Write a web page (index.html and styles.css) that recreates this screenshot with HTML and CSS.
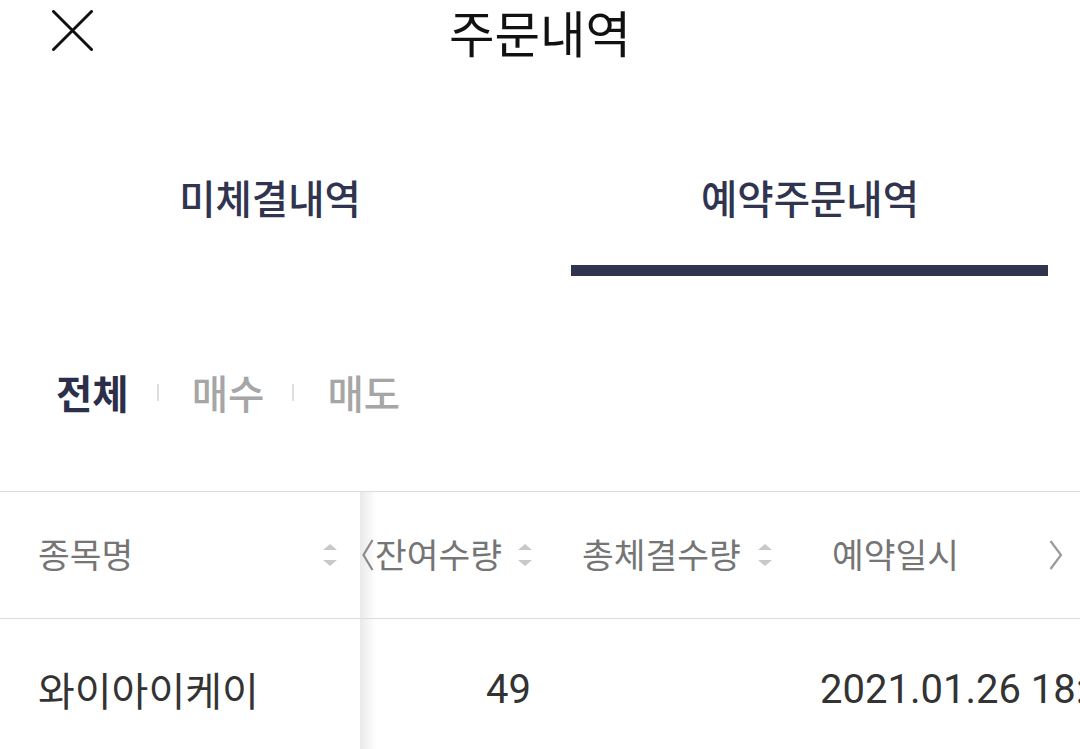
FILE: index.html
```html
<!DOCTYPE html>
<html lang="ko">
<head>
<meta charset="utf-8">
<title>주문내역</title>
<link rel="stylesheet" href="styles.css">
</head>
<body>
<header class="topbar">
  <button class="close" aria-label="닫기">
    <svg width="41" height="41" viewBox="0 0 41 41"><path d="M1.5 1.5 L39.5 39.5 M39.5 1.5 L1.5 39.5" stroke="#111" stroke-width="3" stroke-linecap="round" fill="none"/></svg>
  </button>
  <h1 class="title">주문내역</h1>
  <span class="spacer"></span>
</header>

<nav class="tabs">
  <div class="tab"><span class="tab-label">미체결내역</span><span class="tab-bar"></span></div>
  <div class="tab active"><span class="tab-label">예약주문내역</span><span class="tab-bar"></span></div>
</nav>

<div class="filters">
  <span class="filter on">전체</span>
  <span class="sep"></span>
  <span class="filter">매수</span>
  <span class="sep"></span>
  <span class="filter">매도</span>
</div>

<section class="table">
  <div class="fixed">
    <div class="th th-name">
      <span>종목명</span>
      <svg class="sort" width="14" height="22" viewBox="0 0 14 22"><path d="M7 0 L14 6 L0 6 Z M0 16 L14 16 L7 22 Z" fill="#c8c8c8"/></svg>
    </div>
    <div class="td td-name">와이아이케이</div>
  </div>
  <div class="scroll">
    <div class="th-row">
      <div class="col col-a">
        <svg class="chev" width="12" height="32" viewBox="0 0 12 32"><path d="M10.5 1 L1.5 16 L10.5 31" stroke="#8a8a8a" stroke-width="2.2" fill="none"/></svg>
        <span class="h-text">잔여수량</span>
        <svg class="sort" width="14" height="22" viewBox="0 0 14 22"><path d="M7 0 L14 6 L0 6 Z M0 16 L14 16 L7 22 Z" fill="#c8c8c8"/></svg>
      </div>
      <div class="col col-b">
        <span class="h-text">총체결수량</span>
        <svg class="sort" width="14" height="22" viewBox="0 0 14 22"><path d="M7 0 L14 6 L0 6 Z M0 16 L14 16 L7 22 Z" fill="#c8c8c8"/></svg>
      </div>
      <div class="col col-c">
        <span class="h-text">예약일시</span>
        <svg class="chev-r" width="14" height="30" viewBox="0 0 14 30"><path d="M1.5 1 L12 15 L1.5 29" stroke="#9a9a9a" stroke-width="2.2" fill="none"/></svg>
      </div>
    </div>
    <div class="td-row">
      <div class="cell cell-a">49</div>
      <div class="cell cell-b"></div>
      <div class="cell cell-c">2021.01.26 18:30</div>
    </div>
  </div>
</section>
</body>
</html>
```

FILE: styles.css
```css
html, body {
  margin: 0;
  padding: 0;
  background: #fff;
  width: 1080px;
  height: 749px;
  overflow: hidden;
  font-family: "Roboto", "Noto Sans CJK KR", "Noto Sans", sans-serif;
}

.topbar {
  height: 66px;
  display: grid;
  grid-template-columns: 1fr auto 1fr;
  align-items: start;
  padding-left: 52px;
  padding-right: 52px;
  box-sizing: border-box;
}
.close {
  justify-self: start;
  border: 0;
  background: none;
  padding: 0;
  width: 41px;
  height: 41px;
  margin-top: 10px;
}
.close svg { display: block; }
.title {
  margin: 0;
  font-family: "Noto Sans CJK KR", sans-serif;
  font-size: 49.5px;
  font-weight: 400;
  line-height: 64px;
  color: #111;
}

.tabs {
  display: flex;
  height: 211px;
}
.tab {
  flex: 1;
  display: flex;
  flex-direction: column;
  align-items: center;
  padding-top: 105px;
}
.tab-label {
  font-family: "Noto Sans CJK KR", sans-serif;
  font-size: 39.5px;
  font-weight: 500;
  line-height: 52px;
  color: #30344f;
}
.tab-bar {
  align-self: stretch;
  margin: 42px 32px 0 31px;
  height: 11px;
  background: transparent;
}
.tab.active .tab-bar { background: #31344f; }

.filters {
  display: flex;
  align-items: center;
  padding-left: 56px;
  margin-top: 89px;
  height: 52px;
  margin-bottom: 73px;
}
.filter {
  font-family: "Noto Sans CJK KR", sans-serif;
  font-size: 39.5px;
  line-height: 52px;
  font-weight: 500;
  color: #a6a6a6;
}
.filter.on {
  font-weight: 700;
  color: #2b2f4a;
}
.sep {
  width: 2px;
  height: 17px;
  background: #dedede;
  margin: 0 33px 0 28px;
}

.table {
  display: flex;
  border-top: 1px solid #dcdcdc;
}
.fixed {
  width: 360px;
  flex: none;
}
.th {
  border-bottom: 1px solid #dcdcdc;
  display: flex;
  align-items: center;
  box-sizing: border-box;
}
.th-name {
  height: 127px;
  padding-left: 38px;
  padding-right: 23px;
  justify-content: space-between;
  font-family: "Noto Sans CJK KR", sans-serif;
  font-size: 34.5px;
  line-height: 46px;
  color: #757575;
}
.th-name span { margin-top: -4px; }
.sort { display: block; flex: none; }
.td-name {
  height: 142px;
  display: flex;
  align-items: center;
  padding-left: 38px;
  font-family: "Noto Sans CJK KR", sans-serif;
  font-size: 40px;
  line-height: 50px;
  color: #333;
  margin-top: -1px;
}

.scroll {
  flex: 1;
  overflow: hidden;
  background-image: linear-gradient(to right, #e9e9e9, rgba(255,255,255,0) 16px);
  background-size: 16px 100%;
  background-repeat: no-repeat;
}
.th-row {
  height: 127px;
  box-sizing: border-box;
  border-bottom: 1px solid #dcdcdc;
  display: grid;
  grid-template-columns: 200px 240px 280px;
}
.col {
  display: flex;
  align-items: center;
}
.h-text {
  font-family: "Noto Sans CJK KR", sans-serif;
  font-size: 34.5px;
  line-height: 46px;
  color: #757575;
  white-space: nowrap;
  margin-top: -4px;
}
.col-a { padding-left: 2px; }
.col-a .chev { display: block; margin-right: 1px; }
.col-a .h-text { margin-right: 16px; }
.col-b { padding-left: 22px; }
.col-b .h-text { margin-right: 17px; }
.col-c { padding-left: 32px; padding-right: 17px; }
.chev-r { display: block; margin-left: auto; }

.td-row {
  height: 142px;
  display: grid;
  grid-template-columns: 200px 240px 280px;
  margin-top: -1px;
}
.cell {
  display: flex;
  align-items: center;
  font-family: "Roboto", "Noto Sans CJK KR", sans-serif;
  font-size: 40px;
  color: #333;
  white-space: nowrap;
  overflow: hidden;
}
.cell-a { justify-content: flex-end; padding-right: 29px; }
.cell-c { padding-left: 20px; }
```
